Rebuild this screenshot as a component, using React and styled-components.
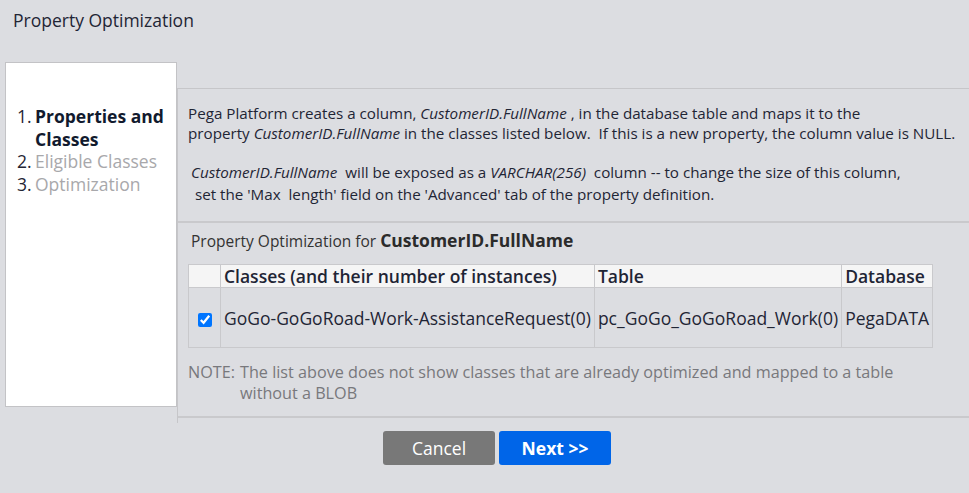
import React from "react";
import styled, { createGlobalStyle } from "styled-components";

const Global = createGlobalStyle`
  html, body { margin: 0; padding: 0; }
  body {
    background: #dcdde1;
    font-family: "Open Sans", "Liberation Sans", sans-serif;
    color: #1f2535;
    width: 969px;
    height: 493px;
    overflow: hidden;
  }
`;

const Page = styled.div`
  display: flex;
  flex-direction: column;
`;

const Title = styled.h1`
  margin: 0;
  font-size: 17.5px;
  font-weight: 400;
  line-height: 22px;
  padding: 9px 13px 31px;
  color: #1f2535;
`;

const Body = styled.div`
  display: flex;
  align-items: flex-start;
`;

const Sidebar = styled.nav`
  margin-left: 5px;
  width: 170px;
  height: 343px;
  background: #fff;
  border: 1px solid #c3c3c6;
  box-sizing: content-box;
`;

const StepList = styled.ol`
  margin: 0;
  padding: 42px 6px 0 11px;
  list-style: none;
`;

const Step = styled.li`
  display: flex;
  font-size: 17.5px;
  line-height: 22.5px;
`;

const StepNum = styled.span`
  width: 18px;
  flex: none;
  color: #1f2535;
`;

const StepLabel = styled.span`
  color: ${(p) => (p.$active ? "#111a2e" : "#a8a8ab")};
  font-weight: ${(p) => (p.$active ? 700 : 400)};
`;

const Content = styled.main`
  flex: 1;
  min-width: 0;
  margin-top: 26px;
  border-left: 1px solid #c6c6c9;
  border-top: 1px solid #c6c6c9;
  min-height: 334px;
`;

const Section = styled.section`
  border-bottom: 2px solid #c9c9cc;
  padding: ${(p) => p.$pad};
`;

const Para = styled.p`
  margin: 0 0 ${(p) => p.$mb || 0}px;
  font-size: 15.2px;
  line-height: ${(p) => p.$lh || 20}px;
  padding-left: ${(p) => p.$indent || 0}px;
  white-space: pre;
`;

const Em = styled.i``;

const SubTitle = styled.div`
  font-size: 15.5px;
  line-height: 22px;
  color: #333;
  margin-bottom: 12px;
  padding-left: 3px;
  b {
    font-size: 17.5px;
    font-weight: 700;
    color: #2b2b2b;
  }
`;

const Table = styled.table`
  border-collapse: collapse;
  font-size: 17.5px;
  color: #1f2535;
`;

const Th = styled.th`
  background: #f5f5f5;
  border: 1px solid #c9c9cc;
  text-align: left;
  font-weight: 600;
  font-size: 17.5px;
  height: 22px;
  line-height: 20px;
  padding: 0 3px;
  white-space: nowrap;
`;

const Td = styled.td`
  border: 1px solid #c9c9cc;
  height: 59px;
  padding: 0 3px;
  white-space: nowrap;
  text-align: ${(p) => (p.$center ? "center" : "left")};
  width: ${(p) => (p.$w ? p.$w + "px" : "auto")};
`;

const Check = styled.input`
  width: 14px;
  height: 14px;
  margin: 0;
  accent-color: #0075ff;
  vertical-align: middle;
`;

const Note = styled.div`
  display: flex;
  margin-top: 14px;
  font-size: 16.2px;
  line-height: 21px;
  color: #78787c;
`;

const NoteLabel = styled.span`
  flex: none;
  width: 52px;
`;

const NoteText = styled.span`
  width: 700px;
`;

const Buttons = styled.div`
  display: flex;
  justify-content: center;
  gap: 4px;
  padding: 8px 0 0 25px;
`;

const Button = styled.button`
  width: 112px;
  height: 34px;
  border: none;
  border-radius: 3px;
  font-family: inherit;
  font-size: 17.5px;
  color: #fff;
  background: ${(p) => (p.$primary ? "#0065e8" : "#787878")};
  font-weight: ${(p) => (p.$primary ? 700 : 400)};
  cursor: pointer;
`;

export default function App() {
  return (
    <Page>
      <Global />
      <Title>Property Optimization</Title>
      <Body>
        <Sidebar>
          <StepList>
            <Step>
              <StepNum>1.</StepNum>
              <StepLabel $active>Properties and Classes</StepLabel>
            </Step>
            <Step>
              <StepNum>2.</StepNum>
              <StepLabel>Eligible Classes</StepLabel>
            </Step>
            <Step>
              <StepNum>3.</StepNum>
              <StepLabel>Optimization</StepLabel>
            </Step>
          </StepList>
        </Sidebar>
        <Content>
          <Section $pad="14px 0 16px 10px">
            <Para $mb={18}>
              Pega Platform creates a column, <Em>CustomerID.FullName</Em> , in the database table and maps it to the
              <br />
              property <Em>CustomerID.FullName</Em> in the classes listed below.  If this is a new property, the column value is NULL.
            </Para>
            <Para $indent={3} $lh={22}>
              <Em>CustomerID.FullName</Em>  will be exposed as a <Em>VARCHAR(256)</Em>  column -- to change the size of this column,
              <br />
              {" set the 'Max  length' field on the 'Advanced' tab of the property definition."}
            </Para>
          </Section>
          <Section $pad="6px 10px 12px 10px">
            <SubTitle>
              Property Optimization for <b>CustomerID.FullName</b>
            </SubTitle>
            <Table>
              <thead>
                <tr>
                  <Th />
                  <Th>Classes (and their number of instances)</Th>
                  <Th>Table</Th>
                  <Th>Database</Th>
                </tr>
              </thead>
              <tbody>
                <tr>
                  <Td $center $w={25}>
                    <Check type="checkbox" checked readOnly />
                  </Td>
                  <Td>GoGo-GoGoRoad-Work-AssistanceRequest(0)</Td>
                  <Td>pc_GoGo_GoGoRoad_Work(0)</Td>
                  <Td>PegaDATA</Td>
                </tr>
              </tbody>
            </Table>
            <Note>
              <NoteLabel>NOTE:</NoteLabel>
              <NoteText>
                The list above does not show classes that are already optimized and mapped to a table without a BLOB
              </NoteText>
            </Note>
          </Section>
        </Content>
      </Body>
      <Buttons>
        <Button>Cancel</Button>
        <Button $primary>Next &gt;&gt;</Button>
      </Buttons>
    </Page>
  );
}
